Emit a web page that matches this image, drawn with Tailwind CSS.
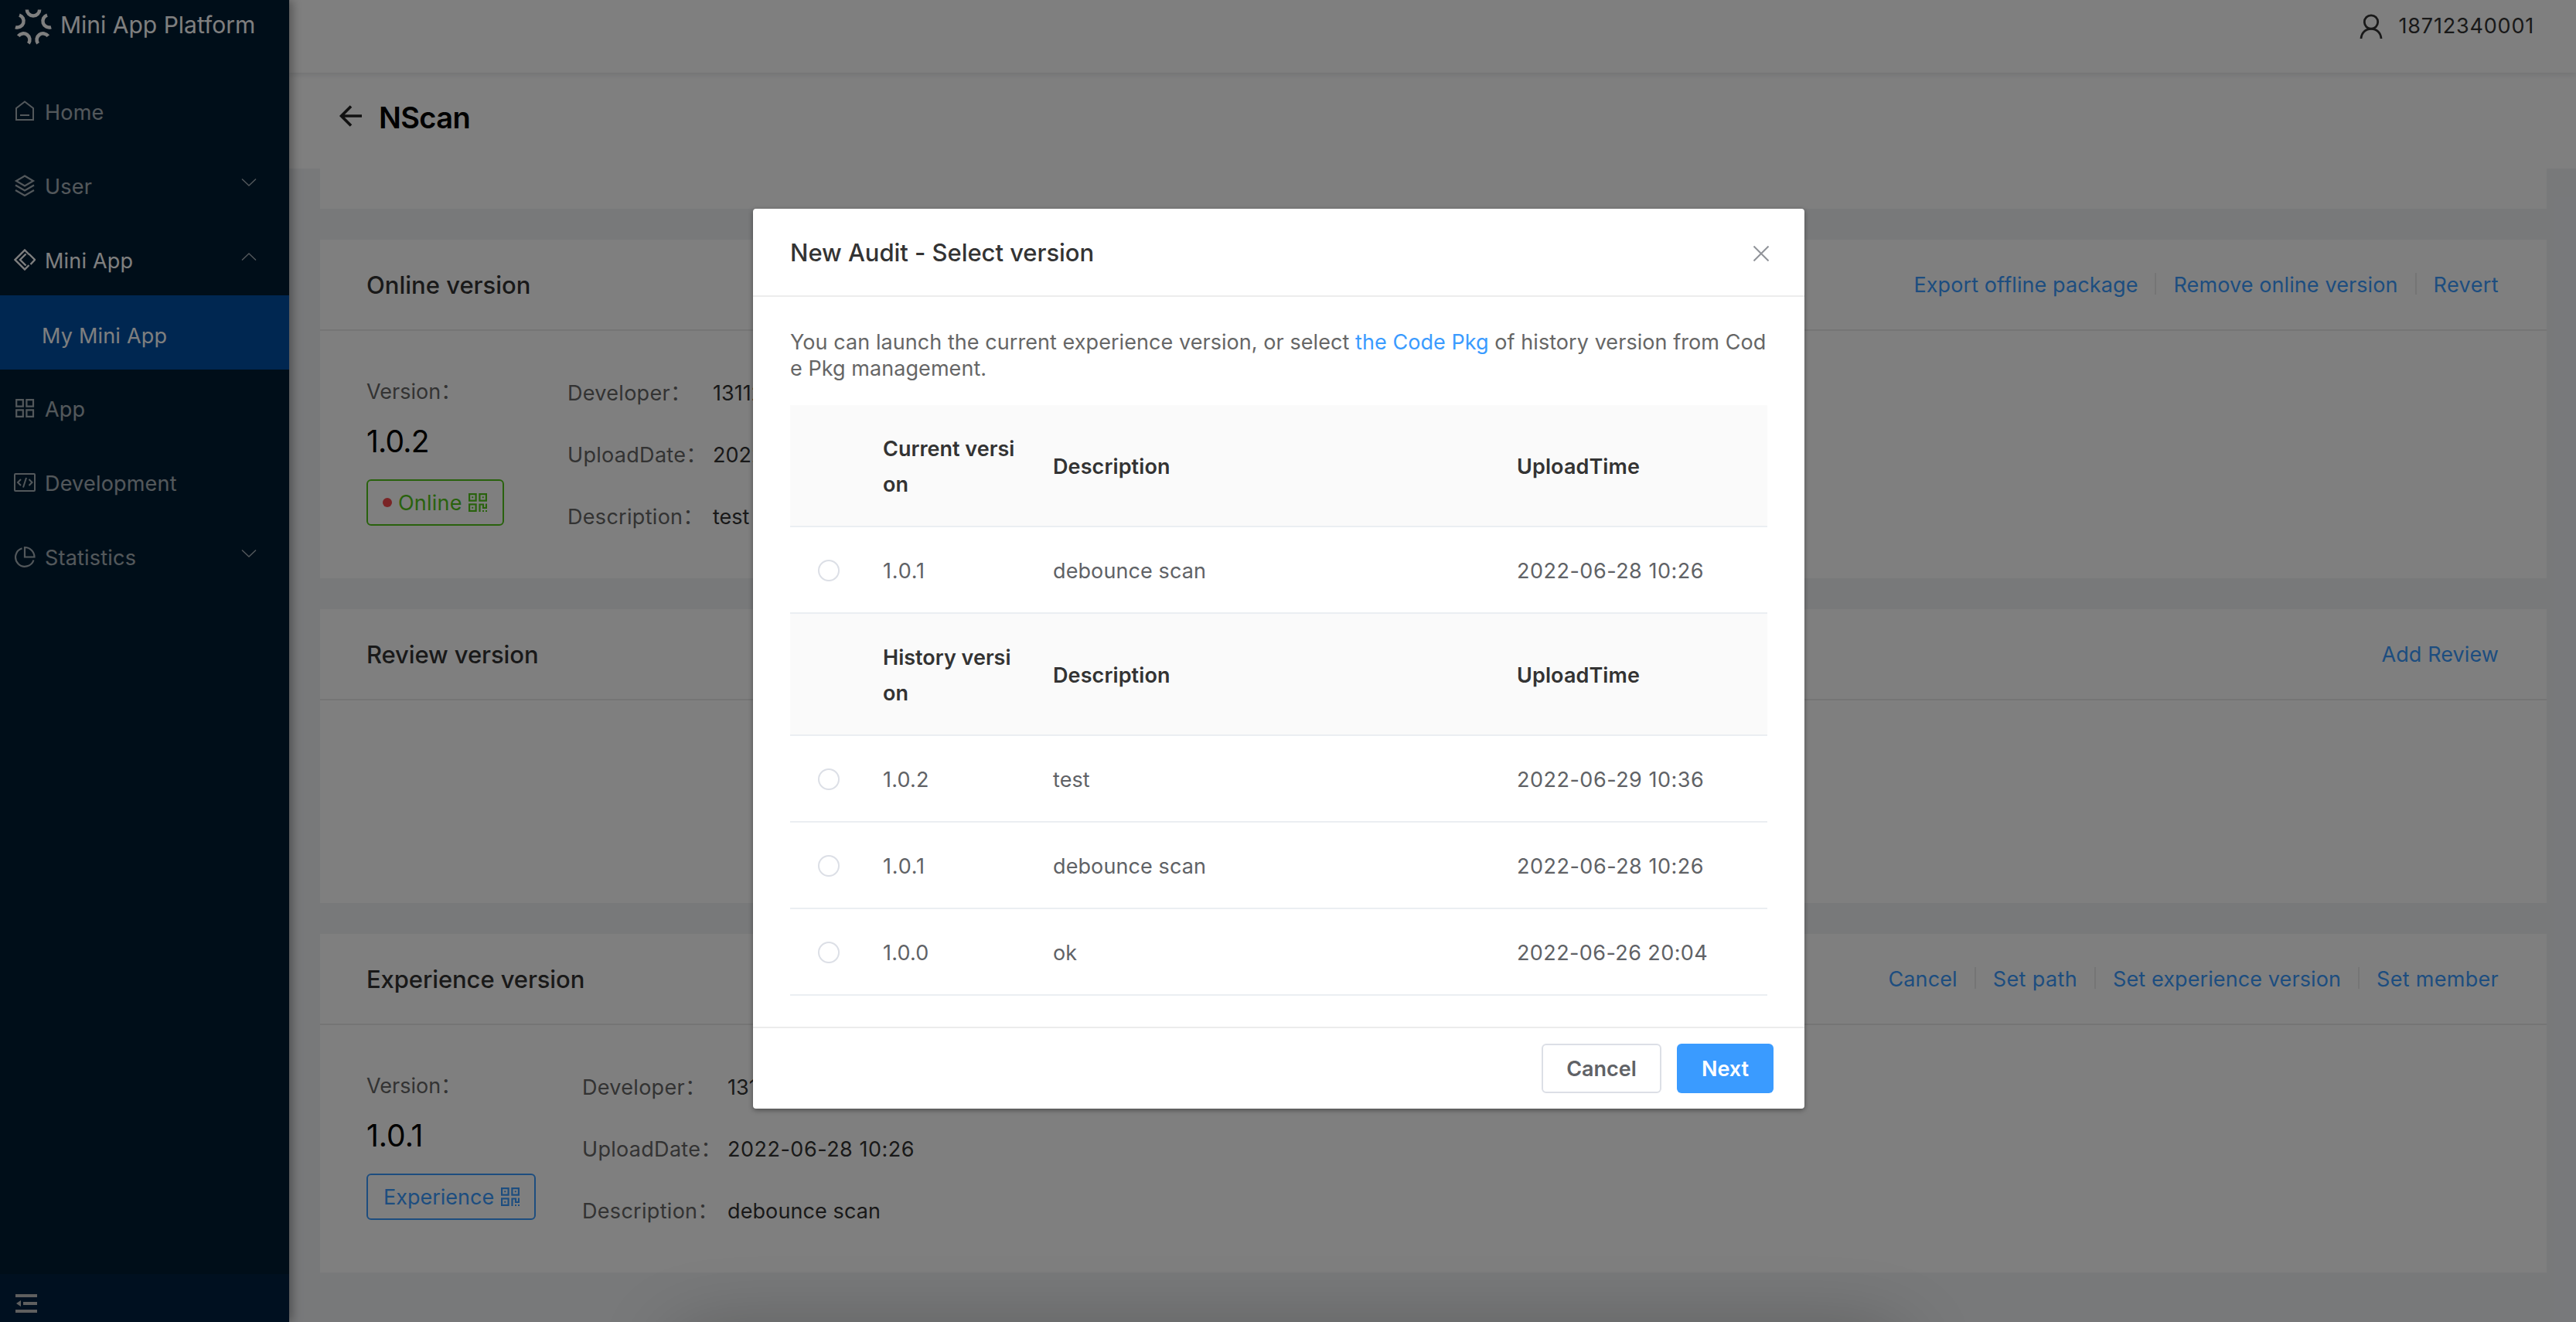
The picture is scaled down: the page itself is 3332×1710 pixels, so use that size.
<!DOCTYPE html>
<html lang="en">
<head>
  <meta charset="UTF-8" />
  <meta name="viewport" content="width=device-width, initial-scale=1.0" />
  <title>Mini App Platform</title>
  <script src="https://cdn.jsdelivr.net/npm/@tailwindcss/browser@4"></script>
</head>
<body class="relative w-[3332px] h-[1710px] overflow-hidden flex bg-[#f0f2f5] font-['Inter','Noto_Sans_CJK_SC',sans-serif] text-[27px] text-[#333]">

  <!-- Icon sprites -->
  <svg class="hidden">
    <symbol id="qr" viewBox="0 0 24 24">
      <g fill="none" stroke="currentColor" stroke-width="2.200">
        <rect x="1.100" y="1.100" width="8.500" height="8.500" />
        <rect x="14.400" y="1.100" width="8.500" height="8.500" />
        <rect x="1.100" y="14.400" width="8.500" height="8.500" />
        <path d="M14.500 24v-9.500h4.500v4.500h4v-5.500" />
      </g>
      <path fill="currentColor" d="M4.250 4.250h2v2h-2zM17.750 4.250h2v2h-2zM4.250 17.750h2v2h-2zM18 22h2v2h-2zM22 22h2v2h-2z" />
    </symbol>
    <symbol id="down" viewBox="0 0 20 12">
      <path d="M1 1.500l9 8.500 9-8.500" fill="none" stroke="currentColor" stroke-width="1.400" />
    </symbol>
  </svg>

  <!-- Sidebar -->
  <aside class="relative z-20 w-[374px] h-full shrink-0 flex flex-col bg-[#001c32] text-white/65 tracking-[0.2px] shadow-[4px_0_12px_rgba(0,0,0,0.35)]">
    <div class="h-[94px] flex items-start pl-[19px] text-white">
      <svg class="w-12 h-12 mt-2.5" viewBox="-25 -25 50 50" fill="none" stroke="currentColor" stroke-width="4.700">
        <path id="petal" d="M-8.500 -22.500a8.500 8.500 0 0 0 17 0" />
        <use href="#petal" transform="rotate(72)" />
        <use href="#petal" transform="rotate(144)" />
        <use href="#petal" transform="rotate(216)" />
        <use href="#petal" transform="rotate(288)" />
      </svg>
      <span class="ml-[11px] mt-3 text-[30px] leading-10 tracking-normal">Mini App Platform</span>
    </div>

    <nav class="flex-1 flex flex-col">
      <a class="h-24 pt-1 pl-[18px] flex items-center gap-3">
        <svg class="size-7" viewBox="0 0 28 28" fill="none" stroke="currentColor" stroke-width="2"><path d="M14 1.500l11 8.500v15H3V10zM8 19h12" /></svg>
        <span class="mt-1">Home</span>
      </a>
      <a class="h-24 pt-1 pl-[18px] pr-[42px] flex items-center gap-3">
        <svg class="size-7" viewBox="0 0 28 28" fill="none" stroke="currentColor" stroke-width="2.200"><path d="M14 1.500l11 6.500-11 6.500L3 8zM2 13.500l12 7 12-7M2 20l12 7 12-7" /></svg>
        <span class="mt-1">User</span>
        <svg class="w-5 h-3 ml-auto mb-2"><use href="#down" /></svg>
      </a>
      <a class="h-24 pt-1 pl-[18px] pr-[42px] flex items-center gap-3 text-white">
        <svg class="size-7" viewBox="0 0 28 28" fill="none" stroke="currentColor" stroke-width="2.400"><path d="M19.500 7L14 1.500 1.500 14 14 26.500l5.500-5.500M15.500 6.500L8 14l7.500 7.500M19.500 6.500L27 14l-5.500 6" /></svg>
        <span class="mt-1">Mini App</span>
        <svg class="w-5 h-3 ml-auto mb-2 rotate-180 text-white/65"><use href="#down" /></svg>
      </a>
      <a class="h-24 pt-2.5 pl-[54px] flex items-center bg-[#004ea2] text-white">My Mini App</a>
      <a class="h-24 pt-1 pl-[18px] flex items-center gap-3">
        <svg class="size-7" viewBox="0 0 28 28" fill="none" stroke="currentColor" stroke-width="2.200"><path d="M3.200 3.200h8.600v8.400H3.200zM16.400 3.200H25v8.400h-8.600zM3.200 16.400h8.600v8.400H3.200zM16.400 16.400H25v8.400h-8.600z" /></svg>
        <span class="mt-1">App</span>
      </a>
      <a class="h-24 pt-1 pl-[18px] flex items-center gap-3">
        <svg class="size-7" viewBox="0 0 28 28" fill="none" stroke="currentColor" stroke-width="2"><rect x="1" y="3" width="26" height="22" rx="1" /><path d="M9 10l-4 4 4 4M19.500 10l4 4-4 4M16 8l-4 12.500" stroke-width="2" /></svg>
        <span class="mt-1">Development</span>
      </a>
      <a class="h-24 pt-1 pl-[18px] pr-[42px] flex items-center gap-3">
        <svg class="size-7" viewBox="0 0 28 28" fill="none" stroke="currentColor" stroke-width="2.200"><path d="M10.500 3.300A12 12 0 1 0 25.500 18.500M14 2v12.500h12.500A12.500 12.500 0 0 0 14 2z" /></svg>
        <span class="mt-1">Statistics</span>
        <svg class="w-5 h-3 ml-auto mb-2"><use href="#down" /></svg>
      </a>
    </nav>

    <div class="h-[62px] bg-[#002140] pl-5 pt-[26px]">
      <svg class="w-7 h-6" viewBox="0 0 28 24" fill="#bfbfbf"><path d="M0 0h28v4H0zM10 10h18v4H10zM0 20h28v4H0zM1 12l6-4v8z" /></svg>
    </div>
  </aside>

  <main class="flex-1 flex flex-col">
    <!-- Top bar -->
    <header class="relative z-10 h-[94px] shrink-0 pb-[26px] pr-[54px] flex items-center justify-end gap-[21px] bg-white shadow-[0_2px_8px_rgba(0,21,41,0.12)]">
      <svg class="w-[30px] h-8 mb-px" viewBox="0 0 30 32" fill="none" stroke="currentColor" stroke-width="2.800"><circle cx="15" cy="10.500" r="8.700" /><path d="M2 32C2.500 24 8 19.300 15 19.300S27.500 24 28 32" /></svg>
      <span class="mt-px tracking-[0.8px]">18712340001</span>
    </header>
    <div class="h-[124px] shrink-0 pb-2 pl-16 flex items-center gap-5 bg-white text-[38px] font-semibold tracking-[-0.6px] text-black">
      <svg class="w-8 h-8 mb-0.5" viewBox="0 0 32 32" fill="none" stroke="#222" stroke-width="3.600"><path d="M30 15H4M16 2.500L3.500 15 16 27.500" /></svg>
      <span>NScan</span>
    </div>

    <!-- Version cards -->
    <div class="flex flex-col pl-10 pr-[38px] gap-10">
      <section class="h-[52px] bg-white"></section>

      <section class="h-[438px] bg-white">
        <div class="h-[118px] pt-0.5 pl-[60px] pr-[62px] flex items-center justify-between border-b-2 border-[#ebebeb]">
          <h2 class="text-[31px] font-medium">Online version</h2>
          <div class="flex items-center gap-[22px] tracking-[0.1px] text-[#3a9bff]">
            <a>Export offline package</a>
            <i class="w-0.5 h-7 mb-1 bg-[#ebebeb]"></i>
            <a>Remove online version</a>
            <i class="w-0.5 h-7 mb-1 bg-[#ebebeb]"></i>
            <a class="tracking-[0.4px]">Revert</a>
          </div>
        </div>
        <div class="flex pl-[60px]">
          <div class="w-[260px] pt-[63px]">
            <div class="leading-8 text-[#666]">Version：</div>
            <div class="mt-7 text-[39px] leading-10 tracking-[-0.8px] text-black">1.0.2</div>
            <div class="mt-[29px] w-[178px] h-[60px] pl-[19px] flex items-center border-2 border-[#52c41a] rounded-md text-[#52c41a]">
              <i class="size-3 rounded-full bg-[#f5484c]"></i>
              <span class="ml-2 mt-0.5 tracking-[0.2px]">Online</span>
              <svg class="size-6 ml-2"><use href="#qr" /></svg>
            </div>
          </div>
          <dl class="pt-[65px] grid grid-cols-[188px_auto] gap-y-12 leading-8">
            <dt class="tracking-[0.3px] text-[#666]">Developer：</dt><dd>13112340001</dd>
            <dt class="tracking-[0.3px] text-[#666]">UploadDate：</dt><dd>2022-06-29 10:36</dd>
            <dt class="tracking-[0.3px] text-[#666]">Description：</dt><dd>test</dd>
          </dl>
        </div>
      </section>

      <section class="h-[380px] bg-white">
        <div class="h-[118px] pt-0.5 pl-[60px] pr-[62px] flex items-center justify-between border-b-2 border-[#ebebeb]">
          <h2 class="text-[31px] font-medium tracking-[-0.1px]">Review version</h2>
          <a class="tracking-[0.1px] text-[#3a9bff]">Add Review</a>
        </div>
      </section>

      <section class="h-[438px] bg-white">
        <div class="h-[118px] pt-0.5 pl-[60px] pr-[62px] flex items-center justify-between border-b-2 border-[#ebebeb]">
          <h2 class="text-[31px] font-medium tracking-[-0.1px]">Experience version</h2>
          <div class="flex items-center gap-[22px] tracking-[0.1px] text-[#3a9bff]">
            <a>Cancel</a>
            <i class="w-0.5 h-7 mb-1 bg-[#ebebeb]"></i>
            <a class="tracking-[0.4px]">Set path</a>
            <i class="w-0.5 h-7 mb-1 bg-[#ebebeb]"></i>
            <a>Set experience version</a>
            <i class="w-0.5 h-7 mb-1 bg-[#ebebeb]"></i>
            <a class="tracking-[0.3px]">Set member</a>
          </div>
        </div>
        <div class="flex pl-[60px]">
          <div class="w-[279px] pt-[63px]">
            <div class="leading-8 text-[#666]">Version：</div>
            <div class="mt-7 text-[39px] leading-10 text-black">1.0.1</div>
            <div class="mt-[29px] w-[219px] h-[60px] pl-5 flex items-center border-2 border-[#3a9bff] rounded-md text-[#3a9bff]">
              <span class="mt-0.5">Experience</span>
              <svg class="size-6 ml-[9px]"><use href="#qr" /></svg>
            </div>
          </div>
          <dl class="pt-[65px] grid grid-cols-[188px_auto] gap-y-12 leading-8">
            <dt class="tracking-[0.3px] text-[#666]">Developer：</dt><dd>13112340001</dd>
            <dt class="tracking-[0.3px] text-[#666]">UploadDate：</dt><dd class="tracking-[0.5px]">2022-06-28 10:26</dd>
            <dt class="tracking-[0.3px] text-[#666]">Description：</dt><dd class="tracking-[0.1px]">debounce scan</dd>
          </dl>
        </div>
      </section>
    </div>
  </main>

  <!-- Dialog -->
  <div class="absolute inset-0 z-30 overflow-hidden flex items-start pt-[270px] pl-[974px] bg-black/50">
    <div class="absolute top-[1730px] left-[870px] w-[1592px] h-20 rounded-full shadow-[0_0_100px_rgba(0,0,0,0.3)]"></div>

    <div class="w-[1360px] h-[1164px] flex flex-col bg-white rounded shadow-[0_2px_6px_rgba(0,0,0,0.4)]">
      <div class="h-[114px] pt-0.5 pl-12 pr-[46px] flex items-center justify-between border-b-2 border-[#ececec]">
        <h3 class="text-[31px] font-medium tracking-[-0.05px]">New Audit - Select version</h3>
        <svg class="size-5 mt-0.5" viewBox="0 0 20 20" stroke="#909399" stroke-width="2"><path d="M0.500 0.500l19 19M19.500 0.500l-19 19" /></svg>
      </div>

      <div class="px-12 pt-[42px] flex-1 text-[#606266]">
        <p class="leading-[34px] tracking-[0.06px] whitespace-nowrap text-[#666]">You can launch the current experience version, or select <a class="text-[#3a9bff]">the Code Pkg</a> of history version from Cod<br />e Pkg management.</p>

        <div class="mt-[30px]">
          <div class="grid grid-cols-[100px_220px_600px_344px] items-center h-[158px] pt-1 bg-[#fafafa] border-b-2 border-[#ebeef2] font-semibold text-[#333]">
            <span></span>
            <span class="pl-5 leading-[46px]">Current versi<br />on</span>
            <span class="pl-5 tracking-[0.1px]">Description</span>
            <span class="pl-5 tracking-[0.1px]">UploadTime</span>
          </div>
          <div class="grid grid-cols-[100px_220px_600px_344px] items-center h-28 pt-1 border-b-2 border-[#ebeef2]">
            <i class="ml-9 mb-0.5 size-7 rounded-full border-2 border-[#dcdfe6]"></i>
            <span class="pl-5 tracking-[0.8px]">1.0.1</span>
            <span class="pl-5 tracking-[0.1px]">debounce scan</span>
            <span class="pl-5 tracking-[0.5px]">2022-06-28 10:26</span>
          </div>
          <div class="grid grid-cols-[100px_220px_600px_344px] items-center h-[158px] pt-1 bg-[#fafafa] border-b-2 border-[#ebeef2] font-semibold text-[#333]">
            <span></span>
            <span class="pl-5 leading-[46px]">History versi<br />on</span>
            <span class="pl-5 tracking-[0.1px]">Description</span>
            <span class="pl-5 tracking-[0.1px]">UploadTime</span>
          </div>
          <div class="grid grid-cols-[100px_220px_600px_344px] items-center h-28 pt-1 border-b-2 border-[#ebeef2]">
            <i class="ml-9 mb-0.5 size-7 rounded-full border-2 border-[#dcdfe6]"></i>
            <span class="pl-5 tracking-[0.2px]">1.0.2</span>
            <span class="pl-5 tracking-[0.1px]">test</span>
            <span class="pl-5 tracking-[0.5px]">2022-06-29 10:36</span>
          </div>
          <div class="grid grid-cols-[100px_220px_600px_344px] items-center h-28 pt-1 border-b-2 border-[#ebeef2]">
            <i class="ml-9 mb-0.5 size-7 rounded-full border-2 border-[#dcdfe6]"></i>
            <span class="pl-5 tracking-[0.8px]">1.0.1</span>
            <span class="pl-5 tracking-[0.1px]">debounce scan</span>
            <span class="pl-5 tracking-[0.5px]">2022-06-28 10:26</span>
          </div>
          <div class="grid grid-cols-[100px_220px_600px_344px] items-center h-28 pt-1 border-b-2 border-[#ebeef2]">
            <i class="ml-9 mb-0.5 size-7 rounded-full border-2 border-[#dcdfe6]"></i>
            <span class="pl-5 tracking-[0.2px]">1.0.0</span>
            <span class="pl-5">ok</span>
            <span class="pl-5 tracking-[0.4px]">2022-06-26 20:04</span>
          </div>
        </div>
      </div>

      <div class="h-[106px] pt-5 pr-10 flex items-start justify-end gap-5 border-t-2 border-[#ececec] font-semibold">
        <button class="w-[155px] h-16 pt-0.5 border-2 border-[#dcdfe6] rounded-md text-[#606266]">Cancel</button>
        <button class="w-[125px] h-16 pt-0.5 rounded-md bg-[#3a9bff] text-white">Next</button>
      </div>
    </div>
  </div>
</body>
</html>
